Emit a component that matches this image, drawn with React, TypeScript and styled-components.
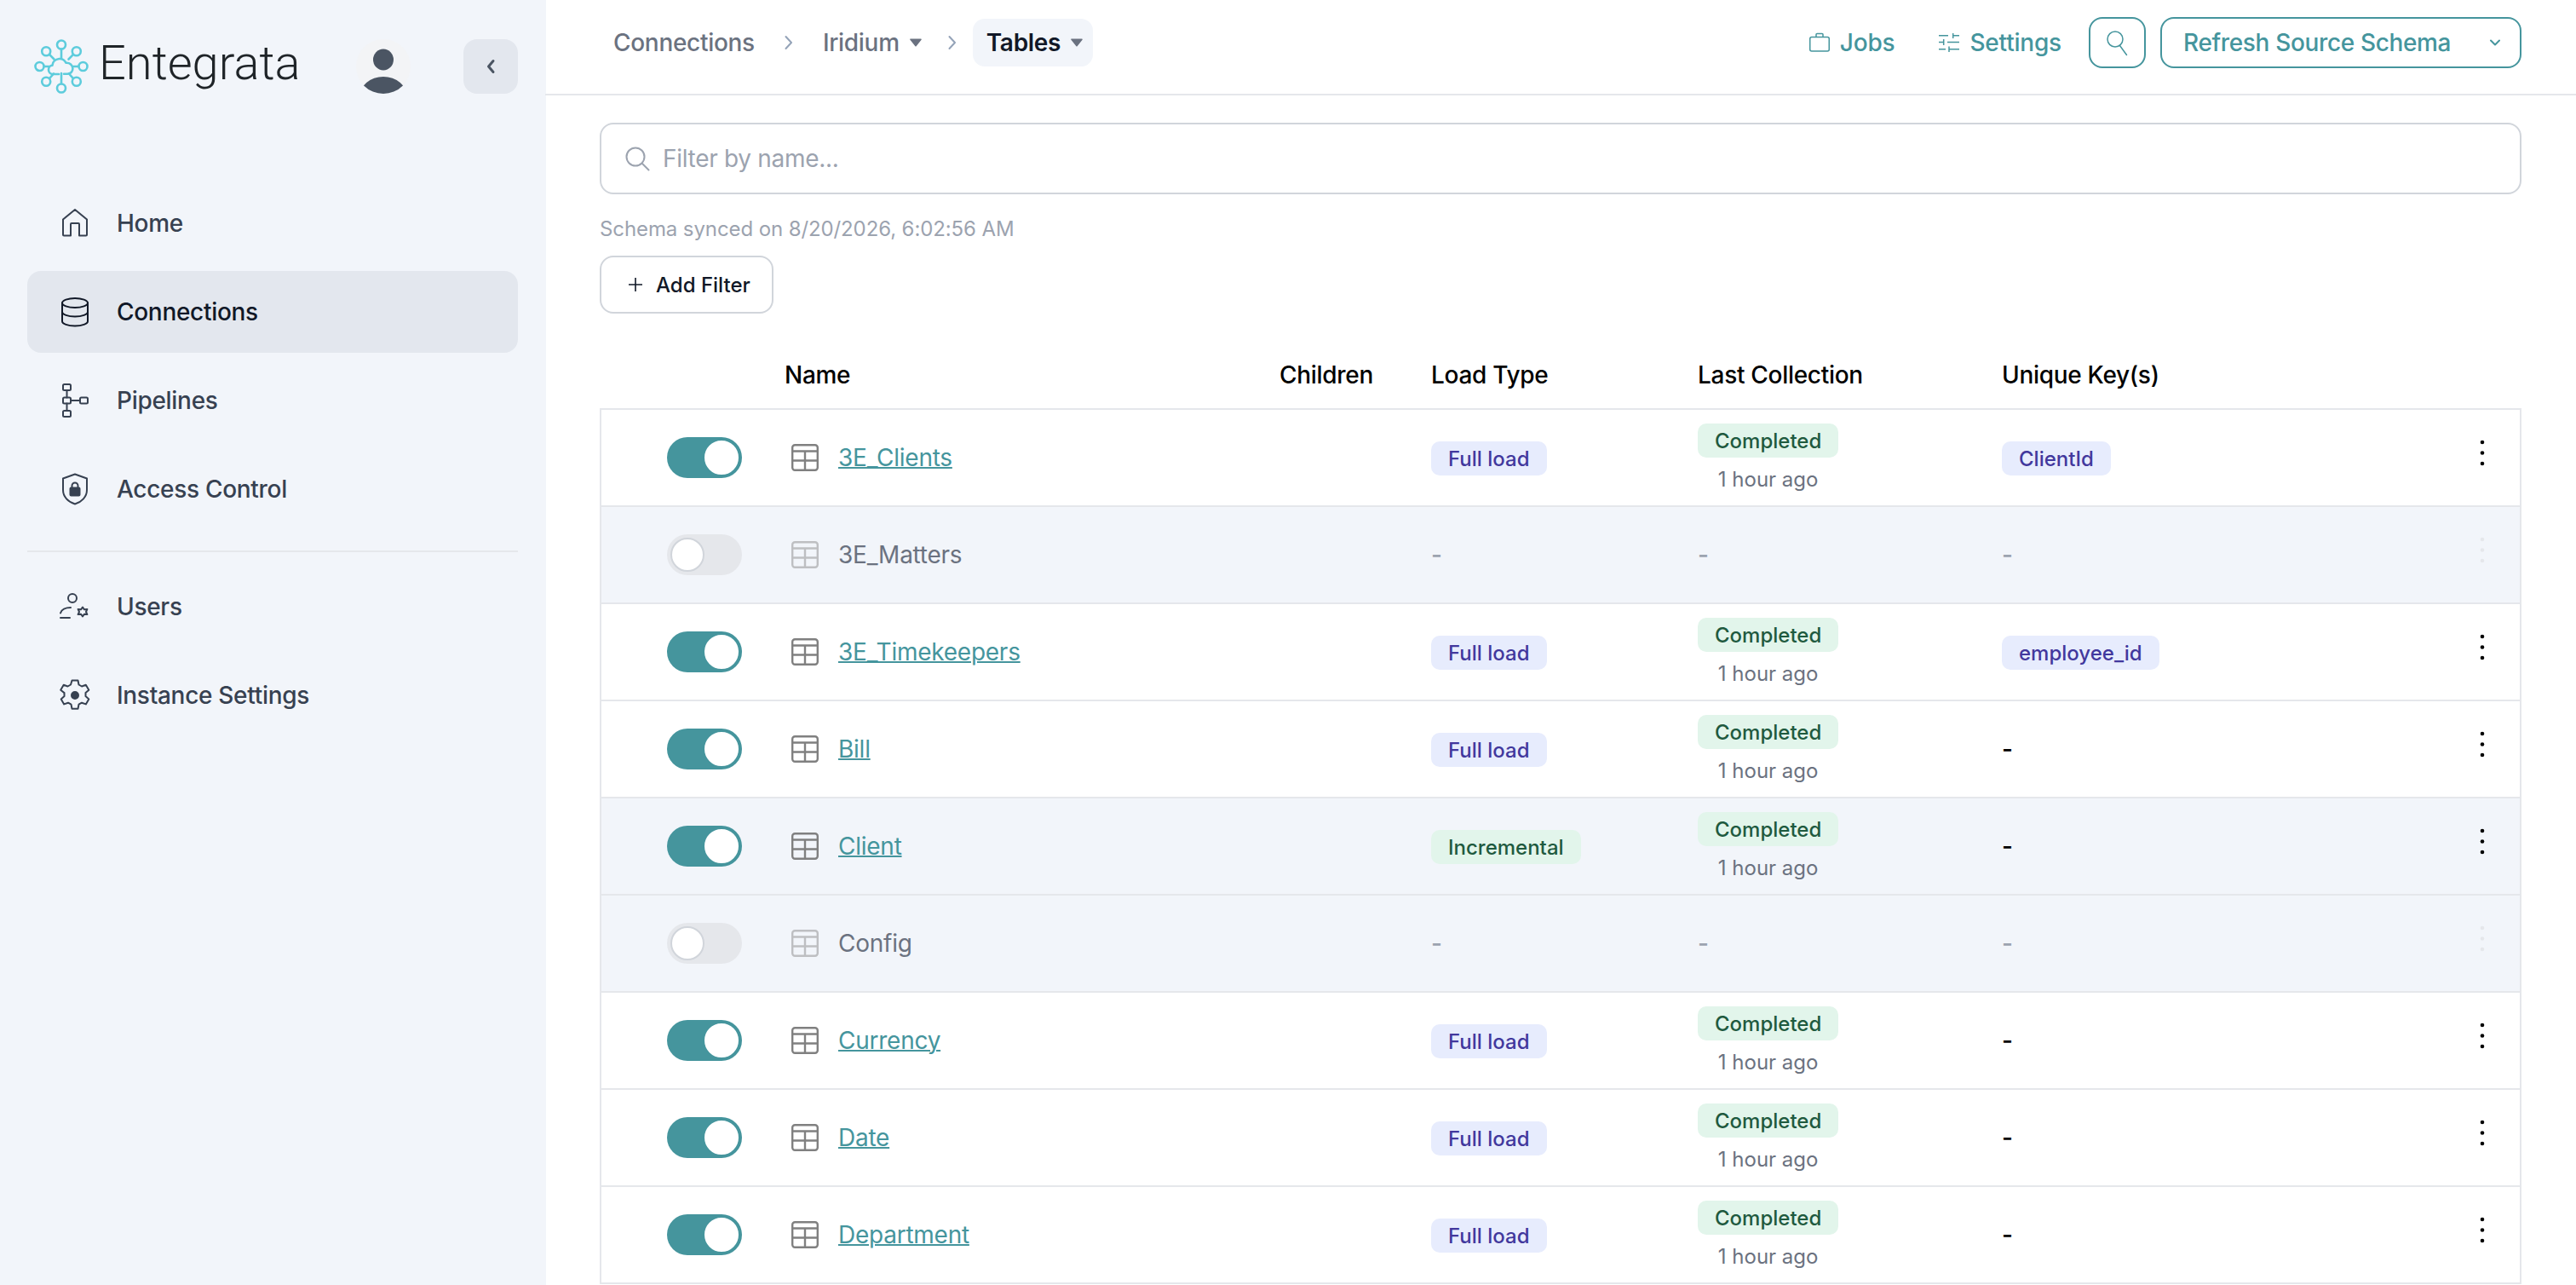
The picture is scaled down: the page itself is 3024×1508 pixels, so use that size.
import React from "react";
import styled, { createGlobalStyle } from "styled-components";

const TEAL = "#45959d";
const GRID = "216px 581px 178px 313px 357px 1fr 88px";

const Global = createGlobalStyle`
  html, body, #root { height: 100%; margin: 0; }
  body { font-family: Inter, "Liberation Sans", sans-serif; background: #fff; color: #111827; -webkit-font-smoothing: antialiased; }
  * { box-sizing: border-box; }
`;

const Shell = styled.div`
  display: grid;
  grid-template-columns: 640px 1fr;
  height: 100vh;
  overflow: hidden;
`;

const Sidebar = styled.aside`
  background: #f2f5fa;
  padding-top: 46px;
  width: 641px;
`;

const Brand = styled.div`
  display: flex;
  align-items: center;
  height: 64px;
  padding: 0 33px 0 40px;
`;

const LogoWrap = styled.div`
  display: flex;
  align-items: center;
  gap: 12px;
  flex: 1;
`;

const LogoText = styled.span`
  font-family: Roboto, "Liberation Sans", sans-serif;
  font-weight: 300;
  font-size: 56px;
  line-height: 64px;
  margin-top: -8px;
  color: #1f2428;
`;

const Avatar = styled.div`
  width: 64px;
  height: 64px;
  margin-right: 62px;
`;

const CollapseBtn = styled.div`
  width: 64px;
  height: 64px;
  border-radius: 16px;
  background: #e3e7ee;
  display: flex;
  align-items: center;
  justify-content: center;
`;

const Nav = styled.nav`
  display: flex;
  flex-direction: column;
  gap: 8px;
  margin-top: 104px;
  padding: 0 33px 0 32px;
`;

const NavItem = styled.div<{ $active?: boolean }>`
  display: flex;
  align-items: center;
  gap: 29px;
  height: 96px;
  padding-left: 36px;
  border-radius: 16px;
  font-size: 28px;
  font-weight: 500;
  letter-spacing: -0.3px;
  color: ${(p) => (p.$active ? "#111827" : "#374151")};
  background: ${(p) => (p.$active ? "#e3e7ee" : "transparent")};
`;

const NavIcon = styled.svg`
  width: 40px;
  height: 40px;
  flex: none;
  fill: none;
  stroke: currentColor;
  stroke-width: 2;
  stroke-linejoin: round;
  stroke-linecap: round;
`;

const NavDivider = styled.div`
  height: 2px;
  background: #e5e7eb;
  margin: 16px 0 8px;
`;

const Main = styled.main`
  display: flex;
  flex-direction: column;
  min-width: 0;
`;

const Header = styled.header`
  display: flex;
  align-items: center;
  justify-content: space-between;
  height: 112px;
  flex: none;
  padding: 0 64px 10px;
  border-bottom: 2px solid #e5e7eb;
`;

const Crumbs = styled.div`
  display: flex;
  align-items: center;
  gap: 12px;
  height: 56px;
`;

const Crumb = styled.div<{ $current?: boolean; $caret?: boolean }>`
  display: flex;
  align-items: center;
  gap: 12px;
  height: 56px;
  padding: 0 ${(p) => (p.$caret ? "12px" : "16px")} 0 16px;
  border-radius: 14px;
  font-size: 28px;
  letter-spacing: -0.3px;
  font-weight: ${(p) => (p.$current ? 600 : 500)};
  color: ${(p) => (p.$current ? "#111827" : "#6b7280")};
  background: ${(p) => (p.$current ? "#f2f5fa" : "transparent")};
`;

const Actions = styled.div`
  display: flex;
  align-items: center;
`;

const TextAction = styled.div<{ $gap: number }>`
  display: flex;
  align-items: center;
  gap: 12px;
  margin-right: ${(p) => p.$gap}px;
  font-size: 28px;
  letter-spacing: -0.2px;
  font-weight: 500;
  color: ${TEAL};
`;

const OutlineButton = styled.div<{ $wide?: boolean }>`
  display: flex;
  align-items: center;
  justify-content: ${(p) => (p.$wide ? "space-between" : "center")};
  height: 60px;
  width: ${(p) => (p.$wide ? "424px" : "67px")};
  margin-left: ${(p) => (p.$wide ? "17px" : "0")};
  padding: ${(p) => (p.$wide ? "0 22px 0 25px" : "0")};
  border: 2px solid ${TEAL};
  border-radius: 16px;
  font-size: 28px;
  letter-spacing: -0.35px;
  font-weight: 500;
  color: ${TEAL};
`;

const Content = styled.div`
  flex: 1;
  padding: 32px 64px 0;
  min-height: 0;
`;

const FilterBox = styled.div`
  display: flex;
  align-items: center;
  gap: 15px;
  height: 84px;
  padding-left: 27px;
  border: 2px solid #d1d5db;
  border-radius: 16px;
  font-size: 28px;
  letter-spacing: -0.3px;
  color: #9ca3af;
`;

const SyncNote = styled.div`
  margin-top: 23px;
  font-size: 24px;
  line-height: 36px;
  letter-spacing: -0.1px;
  color: #9ca3af;
`;

const AddFilter = styled.div`
  display: inline-flex;
  align-items: center;
  gap: 16px;
  height: 68px;
  width: 204px;
  margin-top: 13px;
  padding-left: 32px;
  border: 2px solid #d1d5db;
  border-radius: 16px;
  font-size: 24px;
  font-weight: 500;
  color: #111827;
`;

const HeadRow = styled.div`
  display: grid;
  grid-template-columns: ${GRID};
  align-items: center;
  height: 79px;
  margin-top: 32px;
  padding: 0 2px 0 1px;
  font-size: 28px;
  letter-spacing: -0.3px;
  font-weight: 500;
  color: #000;
`;

const Rows = styled.div`
  border-top: 2px solid #e5e7eb;
  border-left: 2px solid #e5e7eb;
  border-right: 2px solid #e5e7eb;
`;

const Row = styled.div<{ $shaded?: boolean }>`
  display: grid;
  grid-template-columns: ${GRID};
  align-items: center;
  height: 114px;
  border-bottom: 2px solid #e5e7eb;
  background: ${(p) => (p.$shaded ? "#f2f5fa" : "#fff")};
`;

const ToggleCell = styled.div`
  padding-left: 77px;
`;

const Track = styled.div<{ $on: boolean }>`
  display: flex;
  justify-content: ${(p) => (p.$on ? "flex-end" : "flex-start")};
  align-items: center;
  width: 88px;
  height: 48px;
  padding: 4px;
  border-radius: 24px;
  background: ${(p) => (p.$on ? TEAL : "#e5e7eb")};
`;

const Knob = styled.div<{ $on: boolean }>`
  width: 40px;
  height: 40px;
  border-radius: 50%;
  background: #fff;
  border: 2px solid ${(p) => (p.$on ? "#fff" : "#d1d5db")};
`;

const NameCell = styled.div`
  display: flex;
  align-items: center;
  gap: 23px;
  padding-left: 7px;
  font-size: 28px;
  letter-spacing: -0.25px;
`;

const TableGlyph = styled.svg<{ $on: boolean }>`
  width: 32px;
  height: 32px;
  flex: none;
  fill: none;
  stroke: #808080;
  stroke-width: 2.4;
  opacity: ${(p) => (p.$on ? 1 : 0.45)};
`;

const NameLink = styled.a`
  color: ${TEAL};
  text-decoration: underline;
  text-decoration-thickness: 2px;
`;

const NameMuted = styled.span`
  color: #6b7280;
`;

const DataCell = styled.div`
  margin-left: -1px;
`;

const Tag = styled.span<{ $green?: boolean }>`
  display: inline-flex;
  align-items: center;
  height: 40px;
  margin-top: 2px;
  padding: 0 20px;
  border-radius: 10px;
  font-size: 24px;
  font-weight: 500;
  color: ${(p) => (p.$green ? "#1f5a3f" : "#42389d")};
  background: ${(p) => (p.$green ? "#e2f5eb" : "#e7ecfd")};
`;

const Status = styled.div`
  display: inline-flex;
  flex-direction: column;
  align-items: center;
  padding-top: 2px;
`;

const Badge = styled.span`
  display: inline-flex;
  align-items: center;
  height: 40px;
  padding: 0 20px;
  border-radius: 10px;
  font-size: 24px;
  font-weight: 500;
  color: #1f5a3f;
  background: #e2f5eb;
`;

const Ago = styled.span`
  margin-top: 10px;
  font-size: 24px;
  line-height: 32px;
  color: #6b7280;
`;

const Dash = styled.span<{ $muted?: boolean }>`
  font-size: 28px;
  font-weight: 500;
  color: ${(p) => (p.$muted ? "#9ca3af" : "#000")};
`;

const KebabCell = styled.div`
  display: flex;
  justify-content: center;
  margin-bottom: 12px;
`;

const KebabGlyph = styled.svg<{ $on: boolean }>`
  width: 6px;
  height: 31px;
  fill: ${(p) => (p.$on ? "#000" : "#e5e7eb")};
`;

const CaretGlyph = () => (
  <svg width="14" height="10" viewBox="0 0 14 10" fill="#6b7280" stroke="#6b7280" strokeWidth="1.5" strokeLinejoin="round">
    <path d="M1 1.2h12L7 8.8z" />
  </svg>
);

const ChevronGlyph = () => (
  <svg width="24" height="20" viewBox="0 0 24 20" fill="none" stroke="#94a3b8" strokeWidth="2" strokeLinecap="round" strokeLinejoin="round">
    <path d="M8.5 3l6.5 7-6.5 7" />
  </svg>
);

const Logo = () => {
  const c = "#5dccdc";
  const nodes: [number, number, number, number, number, number][] = [
    [32, 6.5, 32, 12, 32, 22],
    [49.8, 14.2, 45.8, 18.2, 40.5, 23.5],
    [57.5, 32, 52, 32, 46.5, 32],
    [49.8, 49.8, 45.8, 45.8, 41, 40.5],
    [32, 57.5, 32, 52, 32, 40],
    [14.2, 49.8, 18.2, 45.8, 23, 40.5],
    [6.5, 32, 12, 32, 17.5, 32],
    [14.2, 14.2, 18.2, 18.2, 23.5, 23.5],
  ];
  return (
    <svg width="64" height="64" viewBox="0 0 64 64" fill="none" stroke={c} strokeWidth="2.6" strokeLinecap="round" strokeLinejoin="round">
      {nodes.map(([cx, cy, x1, y1, x2, y2], i) => (
        <g key={i}>
          <circle cx={cx} cy={cy} r="5" />
          <path d={`M${x1} ${y1}L${x2} ${y2}`} />
        </g>
      ))}
      <path d="M29 41h-7c-3 0-5-2.4-5-5.2 0-2.8 2-4.8 4.4-5 .4-4.2 3.6-7.4 8-7.8 3.6-.2 6.6 1.6 8 4.8 4.4-.4 8 2.6 8 6.8 0 3.6-2.8 6.2-6.2 6.2H35" />
    </svg>
  );
};

const rows: { name: string; on: boolean; load?: string; key?: string; shaded?: boolean }[] = [
  { name: "3E_Clients", on: true, load: "Full load", key: "ClientId" },
  { name: "3E_Matters", on: false },
  { name: "3E_Timekeepers", on: true, load: "Full load", key: "employee_id" },
  { name: "Bill", on: true, load: "Full load" },
  { name: "Client", on: true, load: "Incremental", shaded: true },
  { name: "Config", on: false },
  { name: "Currency", on: true, load: "Full load" },
  { name: "Date", on: true, load: "Full load" },
  { name: "Department", on: true, load: "Full load" },
];

const App = () => (
  <>
    <Global />
    <Shell>
      <Sidebar>
        <Brand>
          <LogoWrap>
            <Logo />
            <LogoText>Entegrata</LogoText>
          </LogoWrap>
          <Avatar>
            <svg width="64" height="64" viewBox="0 0 64 64">
              <defs>
                <clipPath id="av">
                  <circle cx="32" cy="32" r="32" />
                </clipPath>
              </defs>
              <circle cx="32" cy="32" r="32" fill="#f3f4f6" />
              <ellipse cx="32" cy="24" rx="12" ry="12.5" fill="#4b5563" />
              <ellipse cx="32" cy="68" rx="28" ry="24" fill="#4b5563" clipPath="url(#av)" />
            </svg>
          </Avatar>
          <CollapseBtn>
            <svg width="16" height="20" viewBox="0 0 16 20" fill="none" stroke="#4b5563" strokeWidth="3" strokeLinecap="round" strokeLinejoin="round">
              <path d="M11 3.5L5.5 10l5.5 6.5" />
            </svg>
          </CollapseBtn>
        </Brand>
        <Nav>
          <NavItem>
            <NavIcon viewBox="0 0 40 40">
              <path d="M6 15.5L20 4l14 11.500V33.500a1 1 0 0 1-1 1H25V21a1 1 0 0 0-1-1h-8a1 1 0 0 0-1 1v13.500H7a1 1 0 0 1-1-1z" />
            </NavIcon>
            Home
          </NavItem>
          <NavItem $active>
            <NavIcon viewBox="0 0 40 40">
              <ellipse cx="20" cy="9.500" rx="15" ry="5.500" />
              <path d="M5 9.500v21.500c0 3 6.700 5.500 15 5.500s15-2.500 15-5.500V9.500" />
              <path d="M5 20c0 3 6.700 5.500 15 5.500S35 23 35 20" />
            </NavIcon>
            Connections
          </NavItem>
          <NavItem>
            <NavIcon viewBox="0 0 40 40">
              <rect x="6" y="1" width="9" height="7" rx="1.500" />
              <rect x="6" y="16.500" width="9" height="7" rx="1.500" />
              <rect x="6" y="32" width="9" height="7" rx="1.500" />
              <rect x="26" y="16.500" width="9" height="7" rx="1.500" />
              <path d="M10.500 8v8.500M10.500 23.500V32M15 20h11" />
            </NavIcon>
            Pipelines
          </NavItem>
          <NavItem>
            <NavIcon viewBox="0 0 40 40">
              <path d="M20 2.500l14 5V21c0 8-6 14-14 16.500C12 35 6 29 6 21V7.500z" />
              <path d="M15.500 18.500h9a1 1 0 0 1 1 1v7a1 1 0 0 1-1 1h-9a1 1 0 0 1-1-1v-7a1 1 0 0 1 1-1z" fill="currentColor" />
              <path d="M16.500 18.500v-2.500a3.500 3.500 0 0 1 7 0v2.500" />
            </NavIcon>
            Access Control
          </NavItem>
          <NavDivider />
          <NavItem>
            <NavIcon viewBox="0 0 40 40">
              <circle cx="17" cy="10" r="5" />
              <path d="M15 21c-6 0-11 2.500-12 6.500M3 33h11" />
              <path d="M29 20.500l2 2.800 3.400-.4-1.400 3.100 1.400 3.100-3.400-.4-2 2.800-2-2.800-3.400.4 1.400-3.100-1.400-3.100 3.400.4z" />
            </NavIcon>
            Users
          </NavItem>
          <NavItem>
            <NavIcon viewBox="0 0 40 40">
              <path d="M16.500 2.500h7l1 5 3.500 2 4.800-1.700 3.500 6-3.800 3.300v4l3.800 3.300-3.500 6-4.800-1.700-3.500 2-1 5h-7l-1-5-3.500-2-4.800 1.700-3.500-6 3.800-3.300v-4L3.200 13.800l3.500-6 4.800 1.700 3.500-2z" />
              <circle cx="20" cy="20" r="4" fill="currentColor" />
            </NavIcon>
            Instance Settings
          </NavItem>
        </Nav>
      </Sidebar>
      <Main>
        <Header>
          <Crumbs>
            <Crumb>Connections</Crumb>
            <ChevronGlyph />
            <Crumb $caret>
              Iridium
              <CaretGlyph />
            </Crumb>
            <ChevronGlyph />
            <Crumb $caret $current>
              Tables
              <CaretGlyph />
            </Crumb>
          </Crumbs>
          <Actions>
            <TextAction $gap={52}>
              <svg width="24" height="24" viewBox="0 0 24 24" fill="none" stroke={TEAL} strokeWidth="1.5" strokeLinejoin="round">
                <rect x="0.750" y="5.500" width="22.500" height="16.500" rx="2" />
                <path d="M8 5.500V2.500a1 1 0 0 1 1-1h6a1 1 0 0 1 1 1v3" />
              </svg>
              Jobs
            </TextAction>
            <TextAction $gap={32}>
              <svg width="24" height="24" viewBox="0 0 24 24" fill="none" stroke={TEAL} strokeWidth="1.5">
                <path d="M0 3.700h11M16.700 3.700H24M16.700 1v6M0 11.500h5.700M10 11.500h14M5.700 8v7M0 19.700h8M12 19.700h12M12 16.500V23" />
              </svg>
              Settings
            </TextAction>
            <OutlineButton>
              <svg width="32" height="32" viewBox="0 0 32 32" fill="none" stroke={TEAL} strokeWidth="1.5" strokeLinecap="round">
                <circle cx="13" cy="12" r="9" />
                <path d="M18.500 19.500l8 11" />
              </svg>
            </OutlineButton>
            <OutlineButton $wide>
              Refresh Source Schema
              <svg width="14" height="10" viewBox="0 0 14 10" fill="none" stroke={TEAL} strokeWidth="2" strokeLinecap="round" strokeLinejoin="round">
                <path d="M2 2.500l5 5 5-5" />
              </svg>
            </OutlineButton>
          </Actions>
        </Header>
        <Content>
          <FilterBox>
            <svg width="30" height="30" viewBox="0 0 30 30" fill="none" stroke="#9ca3af" strokeWidth="2" strokeLinecap="round">
              <circle cx="13" cy="13" r="10.500" />
              <path d="M21 21l7.500 7.500" />
            </svg>
            Filter by name...
          </FilterBox>
          <SyncNote>Schema synced on 8/20/2026, 6:02:56 AM</SyncNote>
          <AddFilter>
            <svg width="16" height="16" viewBox="0 0 16 16" fill="none" stroke="#111827" strokeWidth="1.6">
              <path d="M8 0v16M0 8h16" />
            </svg>
            Add Filter
          </AddFilter>
          <HeadRow>
            <span />
            <span>Name</span>
            <span>Children</span>
            <span>Load Type</span>
            <span>Last Collection</span>
            <span>Unique Key(s)</span>
            <span />
          </HeadRow>
          <Rows>
            {rows.map((r) => (
              <Row key={r.name} $shaded={!r.on || r.shaded}>
                <ToggleCell>
                  <Track $on={r.on}>
                    <Knob $on={r.on} />
                  </Track>
                </ToggleCell>
                <NameCell>
                  <TableGlyph $on={r.on} viewBox="0 0 32 32">
                    <rect x="1.200" y="1.200" width="29.600" height="29.600" rx="3" />
                    <path d="M1.200 8.500h29.600M1.200 19.500h29.600M16 8.500v22.300" />
                  </TableGlyph>
                  {r.on ? <NameLink>{r.name}</NameLink> : <NameMuted>{r.name}</NameMuted>}
                </NameCell>
                <span />
                <DataCell>
                  {r.on ? <Tag $green={r.load === "Incremental"}>{r.load}</Tag> : <Dash $muted>-</Dash>}
                </DataCell>
                <DataCell>
                  {r.on ? (
                    <Status>
                      <Badge>Completed</Badge>
                      <Ago>1 hour ago</Ago>
                    </Status>
                  ) : (
                    <Dash $muted>-</Dash>
                  )}
                </DataCell>
                <DataCell>
                  {r.key ? <Tag>{r.key}</Tag> : <Dash $muted={!r.on}>-</Dash>}
                </DataCell>
                <KebabCell>
                  <KebabGlyph $on={r.on} viewBox="0 0 6 31">
                    <circle cx="3" cy="3" r="2.300" />
                    <circle cx="3" cy="15.500" r="2.300" />
                    <circle cx="3" cy="28" r="2.300" />
                  </KebabGlyph>
                </KebabCell>
              </Row>
            ))}
          </Rows>
        </Content>
      </Main>
    </Shell>
  </>
);

export default App;
